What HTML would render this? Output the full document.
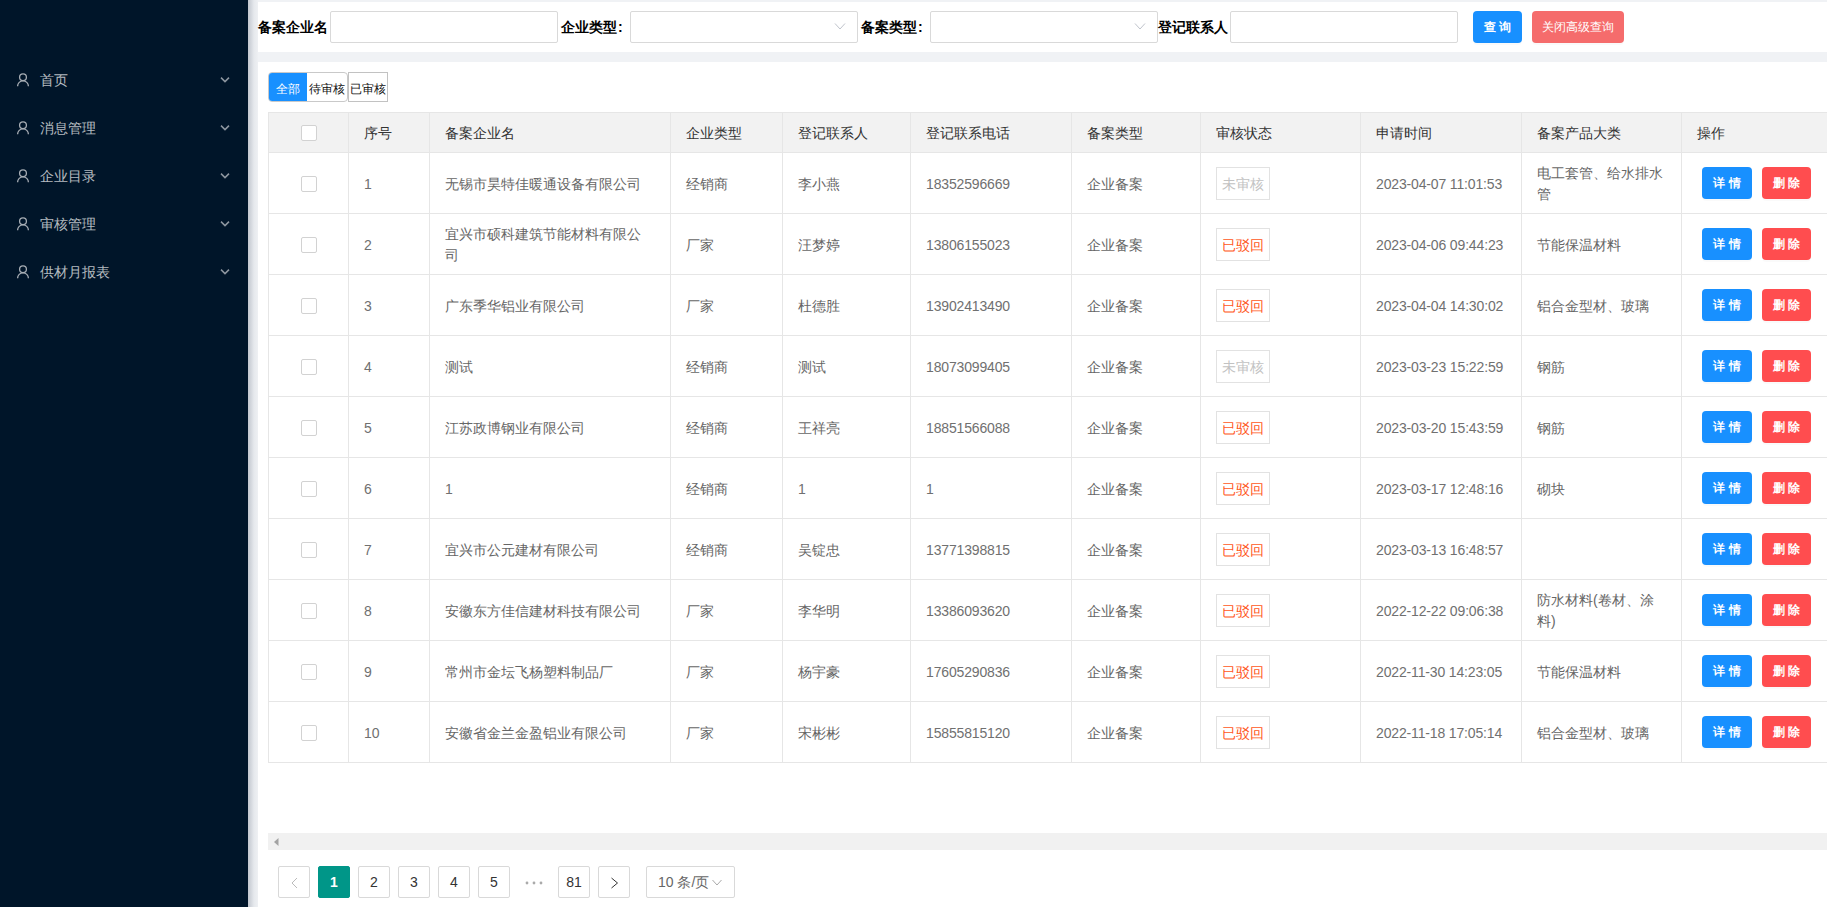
<!DOCTYPE html><html><head><meta charset="utf-8"><style>
*{box-sizing:border-box;margin:0;padding:0}
html,body{width:1827px;height:907px;overflow:hidden}
body{background:#f0f2f5;font-family:"Liberation Sans",sans-serif;position:relative}
.a{position:absolute}
.side{left:0;top:0;width:248px;height:907px;background:#001529}
.shadow{left:248px;top:0;width:10px;height:907px;background:linear-gradient(to right,#c3c7ce 0%,#d3d7dd 30%,#e6e9ed 60%,#eef0f3 100%)}
.mi{left:0;width:248px;height:20px;color:rgba(255,255,255,.72);font-size:14px;line-height:20px}
.mi span{position:absolute;left:40px;top:0}
.mi svg{position:absolute}
.panel{background:#fff}
.lbl{font-size:14px;font-weight:bold;color:#000;line-height:20px;white-space:nowrap}
.inp{height:32px;border:1px solid #d9d9d9;border-radius:2px;background:#fff}
.btn{height:32px;border-radius:4px;color:#fff;font-size:12px;font-weight:bold;line-height:32px;text-align:center;white-space:nowrap;box-shadow:0 2px 0 rgba(0,0,0,.02)}
.tabt{top:79px;height:20px;font-size:12px;line-height:20px;text-align:center;white-space:nowrap}
.hl{background:#e6e6e6}
.th{color:#333;font-size:14px;line-height:20px;white-space:nowrap}
.td{color:#666;font-size:14px;line-height:21px;white-space:nowrap}
.cb{width:16px;height:16px;border:1px solid #d2d2d2;border-radius:2px;background:#fff}
.tag{width:54px;height:33px;border:1px solid #e2e2e2;font-size:14px;line-height:20px;padding-top:6px;text-align:center}
.ob{height:32px;width:50px;border-radius:4px;color:#fff;font-size:12px;font-weight:bold;line-height:32px;text-align:center;box-shadow:0 2px 0 rgba(0,0,0,.02)}
.pg{top:866px;width:32px;height:32px;border:1px solid #d9d9d9;border-radius:2px;font-size:14px;line-height:30px;text-align:center;color:#333;background:#fff}
</style></head><body>
<div class="a side"></div><div class="a shadow"></div>
<div class="a mi" style="top:70px"><svg style="left:12px;top:0px" width="24" height="20" viewBox="0 0 24 20"><circle cx="11" cy="7.2" r="3.4" fill="none" stroke="#a6adb4" stroke-width="1.3"/><path d="M5.6 16.2A5.4 5.4 0 0 1 16.4 16.2" fill="none" stroke="#a6adb4" stroke-width="1.3"/></svg><span>首页</span><svg style="left:218px;top:4px" width="14" height="12" viewBox="0 0 14 12"><polyline points="3,3.6 7,7.6 11,3.6" fill="none" stroke="#8d96a0" stroke-width="1.5"/></svg></div>
<div class="a mi" style="top:118px"><svg style="left:12px;top:0px" width="24" height="20" viewBox="0 0 24 20"><circle cx="11" cy="7.2" r="3.4" fill="none" stroke="#a6adb4" stroke-width="1.3"/><path d="M5.6 16.2A5.4 5.4 0 0 1 16.4 16.2" fill="none" stroke="#a6adb4" stroke-width="1.3"/></svg><span>消息管理</span><svg style="left:218px;top:4px" width="14" height="12" viewBox="0 0 14 12"><polyline points="3,3.6 7,7.6 11,3.6" fill="none" stroke="#8d96a0" stroke-width="1.5"/></svg></div>
<div class="a mi" style="top:166px"><svg style="left:12px;top:0px" width="24" height="20" viewBox="0 0 24 20"><circle cx="11" cy="7.2" r="3.4" fill="none" stroke="#a6adb4" stroke-width="1.3"/><path d="M5.6 16.2A5.4 5.4 0 0 1 16.4 16.2" fill="none" stroke="#a6adb4" stroke-width="1.3"/></svg><span>企业目录</span><svg style="left:218px;top:4px" width="14" height="12" viewBox="0 0 14 12"><polyline points="3,3.6 7,7.6 11,3.6" fill="none" stroke="#8d96a0" stroke-width="1.5"/></svg></div>
<div class="a mi" style="top:214px"><svg style="left:12px;top:0px" width="24" height="20" viewBox="0 0 24 20"><circle cx="11" cy="7.2" r="3.4" fill="none" stroke="#a6adb4" stroke-width="1.3"/><path d="M5.6 16.2A5.4 5.4 0 0 1 16.4 16.2" fill="none" stroke="#a6adb4" stroke-width="1.3"/></svg><span>审核管理</span><svg style="left:218px;top:4px" width="14" height="12" viewBox="0 0 14 12"><polyline points="3,3.6 7,7.6 11,3.6" fill="none" stroke="#8d96a0" stroke-width="1.5"/></svg></div>
<div class="a mi" style="top:262px"><svg style="left:12px;top:0px" width="24" height="20" viewBox="0 0 24 20"><circle cx="11" cy="7.2" r="3.4" fill="none" stroke="#a6adb4" stroke-width="1.3"/><path d="M5.6 16.2A5.4 5.4 0 0 1 16.4 16.2" fill="none" stroke="#a6adb4" stroke-width="1.3"/></svg><span>供材月报表</span><svg style="left:218px;top:4px" width="14" height="12" viewBox="0 0 14 12"><polyline points="3,3.6 7,7.6 11,3.6" fill="none" stroke="#8d96a0" stroke-width="1.5"/></svg></div>
<div class="a panel" style="left:258px;top:2px;width:1569px;height:50px"></div>
<div class="a panel" style="left:258px;top:62px;width:1569px;height:845px"></div>
<div class="a lbl" style="left:258px;top:17px">备案企业名</div>
<div class="a inp" style="left:330px;top:11px;width:228px"></div>
<div class="a lbl" style="left:561px;top:17px">企业类型<span style="margin-left:1px">:</span></div>
<div class="a inp" style="left:630px;top:11px;width:228px"><svg class="a" style="left:203px;top:10px" width="12" height="10" viewBox="0 0 12 10"><polyline points="1,1.5 6,7 11,1.5" fill="none" stroke="#c0c4cc" stroke-width="1"/></svg></div>
<div class="a lbl" style="left:861px;top:17px">备案类型<span style="margin-left:1px">:</span></div>
<div class="a inp" style="left:930px;top:11px;width:228px"><svg class="a" style="left:203px;top:10px" width="12" height="10" viewBox="0 0 12 10"><polyline points="1,1.5 6,7 11,1.5" fill="none" stroke="#c0c4cc" stroke-width="1"/></svg></div>
<div class="a lbl" style="left:1158px;top:17px">登记联系人</div>
<div class="a inp" style="left:1230px;top:11px;width:228px"></div>
<div class="a btn" style="left:1473px;top:11px;width:49px;background:#1890ff">查 询</div>
<div class="a btn" style="left:1532px;top:11px;width:92px;background:#f56c6c;color:#fff;font-weight:normal">关闭高级查询</div>
<div class="a" style="left:268px;top:72px;width:80px;height:30px;border:1px solid #c9c9c9;border-radius:4px;overflow:hidden;background:#fff"><div class="a" style="left:0;top:0;width:38px;height:28px;background:#1890ff"></div></div>
<div class="a" style="left:348px;top:72px;width:40px;height:30px;border:1px solid #c2c2c2"></div>
<div class="a tabt" style="left:268px;width:39px;color:#fff">全部</div>
<div class="a tabt" style="left:307px;width:40px;color:#111">待审核</div>
<div class="a tabt" style="left:348px;width:40px;color:#111">已审核</div>
<div class="a" style="left:268px;top:112px;width:1559px;height:40px;background:#f2f2f2"></div>
<div class="a hl" style="left:268px;top:112px;width:1559px;height:1px"></div>
<div class="a hl" style="left:268px;top:152px;width:1559px;height:1px"></div>
<div class="a hl" style="left:268px;top:213px;width:1559px;height:1px"></div>
<div class="a hl" style="left:268px;top:274px;width:1559px;height:1px"></div>
<div class="a hl" style="left:268px;top:335px;width:1559px;height:1px"></div>
<div class="a hl" style="left:268px;top:396px;width:1559px;height:1px"></div>
<div class="a hl" style="left:268px;top:457px;width:1559px;height:1px"></div>
<div class="a hl" style="left:268px;top:518px;width:1559px;height:1px"></div>
<div class="a hl" style="left:268px;top:579px;width:1559px;height:1px"></div>
<div class="a hl" style="left:268px;top:640px;width:1559px;height:1px"></div>
<div class="a hl" style="left:268px;top:701px;width:1559px;height:1px"></div>
<div class="a hl" style="left:268px;top:762px;width:1559px;height:1px"></div>
<div class="a hl" style="left:268px;top:112px;width:1px;height:651px"></div>
<div class="a hl" style="left:348px;top:112px;width:1px;height:651px"></div>
<div class="a hl" style="left:429px;top:112px;width:1px;height:651px"></div>
<div class="a hl" style="left:670px;top:112px;width:1px;height:651px"></div>
<div class="a hl" style="left:782px;top:112px;width:1px;height:651px"></div>
<div class="a hl" style="left:910px;top:112px;width:1px;height:651px"></div>
<div class="a hl" style="left:1071px;top:112px;width:1px;height:651px"></div>
<div class="a hl" style="left:1200px;top:112px;width:1px;height:651px"></div>
<div class="a hl" style="left:1360px;top:112px;width:1px;height:651px"></div>
<div class="a hl" style="left:1521px;top:112px;width:1px;height:651px"></div>
<div class="a hl" style="left:1681px;top:112px;width:1px;height:651px"></div>
<div class="a cb" style="left:301px;top:125px"></div>
<div class="a th" style="left:364px;top:123px">序号</div>
<div class="a th" style="left:445px;top:123px">备案企业名</div>
<div class="a th" style="left:686px;top:123px">企业类型</div>
<div class="a th" style="left:798px;top:123px">登记联系人</div>
<div class="a th" style="left:926px;top:123px">登记联系电话</div>
<div class="a th" style="left:1087px;top:123px">备案类型</div>
<div class="a th" style="left:1216px;top:123px">审核状态</div>
<div class="a th" style="left:1376px;top:123px">申请时间</div>
<div class="a th" style="left:1537px;top:123px">备案产品大类</div>
<div class="a th" style="left:1697px;top:123px">操作</div>
<div class="a cb" style="left:301px;top:176px"></div>
<div class="a td" style="left:364px;top:174.0px;letter-spacing:-0.15px;color:#707070">1</div>
<div class="a td" style="left:445px;top:174.0px">无锡市昊特佳暖通设备有限公司</div>
<div class="a td" style="left:686px;top:174.0px">经销商</div>
<div class="a td" style="left:798px;top:174.0px">李小燕</div>
<div class="a td" style="left:926px;top:174.0px;letter-spacing:-0.15px;color:#707070">18352596669</div>
<div class="a td" style="left:1087px;top:174.0px">企业备案</div>
<div class="a tag" style="left:1216px;top:167px;color:#c2c2c2">未审核</div>
<div class="a td" style="left:1376px;top:174.0px;letter-spacing:-0.15px;color:#707070">2023-04-07 11:01:53</div>
<div class="a td" style="left:1537px;top:162.5px">电工套管、给水排水<br>管</div>
<div class="a ob" style="left:1702px;top:167px;background:#1890ff">详 情</div>
<div class="a ob" style="left:1762px;top:167px;width:49px;background:#ff4d4f">删 除</div>
<div class="a cb" style="left:301px;top:237px"></div>
<div class="a td" style="left:364px;top:235.0px;letter-spacing:-0.15px;color:#707070">2</div>
<div class="a td" style="left:445px;top:223.5px">宜兴市硕科建筑节能材料有限公<br>司</div>
<div class="a td" style="left:686px;top:235.0px">厂家</div>
<div class="a td" style="left:798px;top:235.0px">汪梦婷</div>
<div class="a td" style="left:926px;top:235.0px;letter-spacing:-0.15px;color:#707070">13806155023</div>
<div class="a td" style="left:1087px;top:235.0px">企业备案</div>
<div class="a tag" style="left:1216px;top:228px;color:#ff5722">已驳回</div>
<div class="a td" style="left:1376px;top:235.0px;letter-spacing:-0.15px;color:#707070">2023-04-06 09:44:23</div>
<div class="a td" style="left:1537px;top:235.0px">节能保温材料</div>
<div class="a ob" style="left:1702px;top:228px;background:#1890ff">详 情</div>
<div class="a ob" style="left:1762px;top:228px;width:49px;background:#ff4d4f">删 除</div>
<div class="a cb" style="left:301px;top:298px"></div>
<div class="a td" style="left:364px;top:296.0px;letter-spacing:-0.15px;color:#707070">3</div>
<div class="a td" style="left:445px;top:296.0px">广东季华铝业有限公司</div>
<div class="a td" style="left:686px;top:296.0px">厂家</div>
<div class="a td" style="left:798px;top:296.0px">杜德胜</div>
<div class="a td" style="left:926px;top:296.0px;letter-spacing:-0.15px;color:#707070">13902413490</div>
<div class="a td" style="left:1087px;top:296.0px">企业备案</div>
<div class="a tag" style="left:1216px;top:289px;color:#ff5722">已驳回</div>
<div class="a td" style="left:1376px;top:296.0px;letter-spacing:-0.15px;color:#707070">2023-04-04 14:30:02</div>
<div class="a td" style="left:1537px;top:296.0px">铝合金型材、玻璃</div>
<div class="a ob" style="left:1702px;top:289px;background:#1890ff">详 情</div>
<div class="a ob" style="left:1762px;top:289px;width:49px;background:#ff4d4f">删 除</div>
<div class="a cb" style="left:301px;top:359px"></div>
<div class="a td" style="left:364px;top:357.0px;letter-spacing:-0.15px;color:#707070">4</div>
<div class="a td" style="left:445px;top:357.0px">测试</div>
<div class="a td" style="left:686px;top:357.0px">经销商</div>
<div class="a td" style="left:798px;top:357.0px">测试</div>
<div class="a td" style="left:926px;top:357.0px;letter-spacing:-0.15px;color:#707070">18073099405</div>
<div class="a td" style="left:1087px;top:357.0px">企业备案</div>
<div class="a tag" style="left:1216px;top:350px;color:#c2c2c2">未审核</div>
<div class="a td" style="left:1376px;top:357.0px;letter-spacing:-0.15px;color:#707070">2023-03-23 15:22:59</div>
<div class="a td" style="left:1537px;top:357.0px">钢筋</div>
<div class="a ob" style="left:1702px;top:350px;background:#1890ff">详 情</div>
<div class="a ob" style="left:1762px;top:350px;width:49px;background:#ff4d4f">删 除</div>
<div class="a cb" style="left:301px;top:420px"></div>
<div class="a td" style="left:364px;top:418.0px;letter-spacing:-0.15px;color:#707070">5</div>
<div class="a td" style="left:445px;top:418.0px">江苏政博钢业有限公司</div>
<div class="a td" style="left:686px;top:418.0px">经销商</div>
<div class="a td" style="left:798px;top:418.0px">王祥亮</div>
<div class="a td" style="left:926px;top:418.0px;letter-spacing:-0.15px;color:#707070">18851566088</div>
<div class="a td" style="left:1087px;top:418.0px">企业备案</div>
<div class="a tag" style="left:1216px;top:411px;color:#ff5722">已驳回</div>
<div class="a td" style="left:1376px;top:418.0px;letter-spacing:-0.15px;color:#707070">2023-03-20 15:43:59</div>
<div class="a td" style="left:1537px;top:418.0px">钢筋</div>
<div class="a ob" style="left:1702px;top:411px;background:#1890ff">详 情</div>
<div class="a ob" style="left:1762px;top:411px;width:49px;background:#ff4d4f">删 除</div>
<div class="a cb" style="left:301px;top:481px"></div>
<div class="a td" style="left:364px;top:479.0px;letter-spacing:-0.15px;color:#707070">6</div>
<div class="a td" style="left:445px;top:479.0px;letter-spacing:-0.15px;color:#707070">1</div>
<div class="a td" style="left:686px;top:479.0px">经销商</div>
<div class="a td" style="left:798px;top:479.0px;letter-spacing:-0.15px;color:#707070">1</div>
<div class="a td" style="left:926px;top:479.0px;letter-spacing:-0.15px;color:#707070">1</div>
<div class="a td" style="left:1087px;top:479.0px">企业备案</div>
<div class="a tag" style="left:1216px;top:472px;color:#ff5722">已驳回</div>
<div class="a td" style="left:1376px;top:479.0px;letter-spacing:-0.15px;color:#707070">2023-03-17 12:48:16</div>
<div class="a td" style="left:1537px;top:479.0px">砌块</div>
<div class="a ob" style="left:1702px;top:472px;background:#1890ff">详 情</div>
<div class="a ob" style="left:1762px;top:472px;width:49px;background:#ff4d4f">删 除</div>
<div class="a cb" style="left:301px;top:542px"></div>
<div class="a td" style="left:364px;top:540.0px;letter-spacing:-0.15px;color:#707070">7</div>
<div class="a td" style="left:445px;top:540.0px">宜兴市公元建材有限公司</div>
<div class="a td" style="left:686px;top:540.0px">经销商</div>
<div class="a td" style="left:798px;top:540.0px">吴锭忠</div>
<div class="a td" style="left:926px;top:540.0px;letter-spacing:-0.15px;color:#707070">13771398815</div>
<div class="a td" style="left:1087px;top:540.0px">企业备案</div>
<div class="a tag" style="left:1216px;top:533px;color:#ff5722">已驳回</div>
<div class="a td" style="left:1376px;top:540.0px;letter-spacing:-0.15px;color:#707070">2023-03-13 16:48:57</div>
<div class="a ob" style="left:1702px;top:533px;background:#1890ff">详 情</div>
<div class="a ob" style="left:1762px;top:533px;width:49px;background:#ff4d4f">删 除</div>
<div class="a cb" style="left:301px;top:603px"></div>
<div class="a td" style="left:364px;top:601.0px;letter-spacing:-0.15px;color:#707070">8</div>
<div class="a td" style="left:445px;top:601.0px">安徽东方佳信建材科技有限公司</div>
<div class="a td" style="left:686px;top:601.0px">厂家</div>
<div class="a td" style="left:798px;top:601.0px">李华明</div>
<div class="a td" style="left:926px;top:601.0px;letter-spacing:-0.15px;color:#707070">13386093620</div>
<div class="a td" style="left:1087px;top:601.0px">企业备案</div>
<div class="a tag" style="left:1216px;top:594px;color:#ff5722">已驳回</div>
<div class="a td" style="left:1376px;top:601.0px;letter-spacing:-0.15px;color:#707070">2022-12-22 09:06:38</div>
<div class="a td" style="left:1537px;top:589.5px">防水材料(卷材、涂<br>料)</div>
<div class="a ob" style="left:1702px;top:594px;background:#1890ff">详 情</div>
<div class="a ob" style="left:1762px;top:594px;width:49px;background:#ff4d4f">删 除</div>
<div class="a cb" style="left:301px;top:664px"></div>
<div class="a td" style="left:364px;top:662.0px;letter-spacing:-0.15px;color:#707070">9</div>
<div class="a td" style="left:445px;top:662.0px">常州市金坛飞杨塑料制品厂</div>
<div class="a td" style="left:686px;top:662.0px">厂家</div>
<div class="a td" style="left:798px;top:662.0px">杨宇豪</div>
<div class="a td" style="left:926px;top:662.0px;letter-spacing:-0.15px;color:#707070">17605290836</div>
<div class="a td" style="left:1087px;top:662.0px">企业备案</div>
<div class="a tag" style="left:1216px;top:655px;color:#ff5722">已驳回</div>
<div class="a td" style="left:1376px;top:662.0px;letter-spacing:-0.15px;color:#707070">2022-11-30 14:23:05</div>
<div class="a td" style="left:1537px;top:662.0px">节能保温材料</div>
<div class="a ob" style="left:1702px;top:655px;background:#1890ff">详 情</div>
<div class="a ob" style="left:1762px;top:655px;width:49px;background:#ff4d4f">删 除</div>
<div class="a cb" style="left:301px;top:725px"></div>
<div class="a td" style="left:364px;top:723.0px;letter-spacing:-0.15px;color:#707070">10</div>
<div class="a td" style="left:445px;top:723.0px">安徽省金兰金盈铝业有限公司</div>
<div class="a td" style="left:686px;top:723.0px">厂家</div>
<div class="a td" style="left:798px;top:723.0px">宋彬彬</div>
<div class="a td" style="left:926px;top:723.0px;letter-spacing:-0.15px;color:#707070">15855815120</div>
<div class="a td" style="left:1087px;top:723.0px">企业备案</div>
<div class="a tag" style="left:1216px;top:716px;color:#ff5722">已驳回</div>
<div class="a td" style="left:1376px;top:723.0px;letter-spacing:-0.15px;color:#707070">2022-11-18 17:05:14</div>
<div class="a td" style="left:1537px;top:723.0px">铝合金型材、玻璃</div>
<div class="a ob" style="left:1702px;top:716px;background:#1890ff">详 情</div>
<div class="a ob" style="left:1762px;top:716px;width:49px;background:#ff4d4f">删 除</div>
<div class="a" style="left:268px;top:833px;width:1559px;height:17px;background:#f1f1f1"></div>
<svg class="a" style="left:272px;top:836px" width="10" height="12" viewBox="0 0 10 12"><polygon points="2,6 6.5,2 6.5,10" fill="#a3a3a3"/></svg>
<div class="a pg" style="left:278px"><svg class="a" style="left:11px;top:10px" width="10" height="12" viewBox="0 0 10 12"><polyline points="7,1 2,6 7,11" fill="none" stroke="#bbb" stroke-width="1"/></svg></div>
<div class="a pg" style="left:318px;background:#009688;border-color:#009688;color:#fff;font-weight:bold">1</div>
<div class="a pg" style="left:358px">2</div>
<div class="a pg" style="left:398px">3</div>
<div class="a pg" style="left:438px">4</div>
<div class="a pg" style="left:478px">5</div>
<div class="a pg" style="left:558px">81</div>
<div class="a pg" style="left:598px"><svg class="a" style="left:11px;top:10px" width="10" height="12" viewBox="0 0 10 12"><polyline points="1.5,1 7.5,6 1.5,11" fill="none" stroke="#333" stroke-width="1"/></svg></div>
<svg class="a" style="left:522px;top:876px" width="24" height="12" viewBox="0 0 24 12"><circle cx="5" cy="7" r="1.4" fill="#aaa"/><circle cx="12" cy="7" r="1.4" fill="#aaa"/><circle cx="19" cy="7" r="1.4" fill="#aaa"/></svg>
<div class="a pg" style="left:646px;width:89px;text-align:left;padding-left:11px;color:#666">10 条/页<svg class="a" style="left:64px;top:10.5px" width="12" height="10" viewBox="0 0 12 10"><polyline points="1.5,2 6,7 10.5,2" fill="none" stroke="#aaa" stroke-width="1"/></svg></div>
</body></html>
